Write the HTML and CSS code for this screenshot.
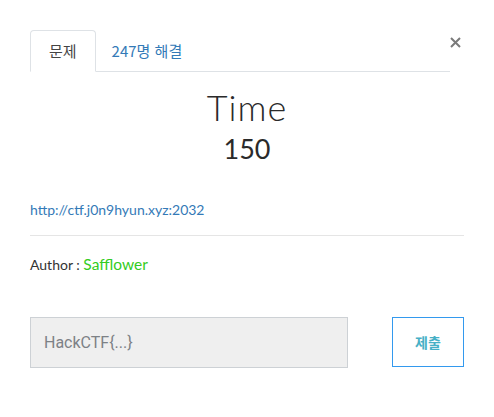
FILE: index.html
```html
<!DOCTYPE html>
<html lang="ko">
<head>
<meta charset="utf-8">
<link rel="stylesheet" href="styles.css">
</head>
<body>
<div class="modal">
  <div class="header">
    <ul class="tabs">
      <li class="tab active">문제</li>
      <li class="tab">247명 해결</li>
    </ul>
    <button class="close" aria-label="닫기">
      <svg width="11" height="11" viewBox="0 0 11 11"><path d="M1 1 L10 10 M10 1 L1 10" stroke="#7a7a7a" stroke-width="2" fill="none"/></svg>
    </button>
  </div>
  <div class="body">
    <h2 class="title">Time</h2>
    <h3 class="points">150</h3>
    <a class="link" href="#">http://ctf.j0n9hyun.xyz:2032</a>
    <hr class="rule">
    <p class="author">Author : <span class="name">Safflower</span></p>
    <form class="submit-row">
      <input class="flag" type="text" placeholder="HackCTF{...}">
      <button class="submit" type="button">제출</button>
    </form>
  </div>
</div>
</body>
</html>
```
FILE: styles.css
```css
* { box-sizing: border-box; }
html, body { margin: 0; padding: 0; background: #fff; }
body { font-family: "Lato", "Noto Sans CJK KR", sans-serif; color: #333; }
.modal { padding: 30px 30px 0 30px; }
.header { display: flex; align-items: flex-start; }
.tabs {
  flex: 1; display: flex; list-style: none; margin: 0; padding: 0;
  border-bottom: 1px solid #dee2e6;
}
.tab {
  font-family: "Noto Sans CJK KR", sans-serif;
  font-size: 15px; line-height: 20px;
  padding: 10px 18px 10px 15px; margin-right: 0; margin-bottom: -1px;
  border: 1px solid transparent; border-radius: 4px 4px 0 0;
  color: #337ab7;
}
.tab.active { padding: 10px 18px; color: #444; background: #fff; border-color: #dee2e6 #dee2e6 #fff; }
.close {
  width: 14px; height: 20px; padding: 0; margin: 7px 0 0 0; border: 0; background: none;
  display: flex; justify-content: flex-start; align-items: flex-start;
}
.close svg { display: block; }
.body { display: flex; flex-direction: column; }
.title {
  margin: 13px 0 0; text-align: center; font-weight: 300; font-size: 36px; line-height: 44px;
  color: #2a2a2a; letter-spacing: 1px;
}
.points { margin: 3px 0 0; text-align: center; font-weight: 400; font-size: 27px; line-height: 34px; color: #2a2a2a; }
.link { margin-top: 34px; font-size: 14px; line-height: 19px; color: #337ab7; text-decoration: none; align-self: flex-start; }
.rule { width: 100%; margin: 16px 0 0; border: 0; border-top: 1px solid #e5e5e5; }
.author { margin: 18px 0 0; font-size: 14px; line-height: 20px; color: #333; }
.name { font-size: 15.5px; color: #33cc22; }
.submit-row { display: flex; justify-content: space-between; margin-top: 42px; }
.flag {
  width: 318px; height: 51px; padding: 0 13px; margin: 0;
  background: #efefef; border: 1px solid #cdd1d5; border-radius: 0;
  font-family: "Roboto", sans-serif; font-size: 16px; color: #555;
}
.flag::placeholder { color: #7d8186; }
.submit {
  width: 72px; height: 50px; margin: 0; padding: 0;
  background: #fff; border: 1px solid #3399ee; border-radius: 0;
  font-family: "Noto Sans CJK KR", sans-serif; font-weight: 700; font-size: 14px; color: #46b0c6;
}
```
